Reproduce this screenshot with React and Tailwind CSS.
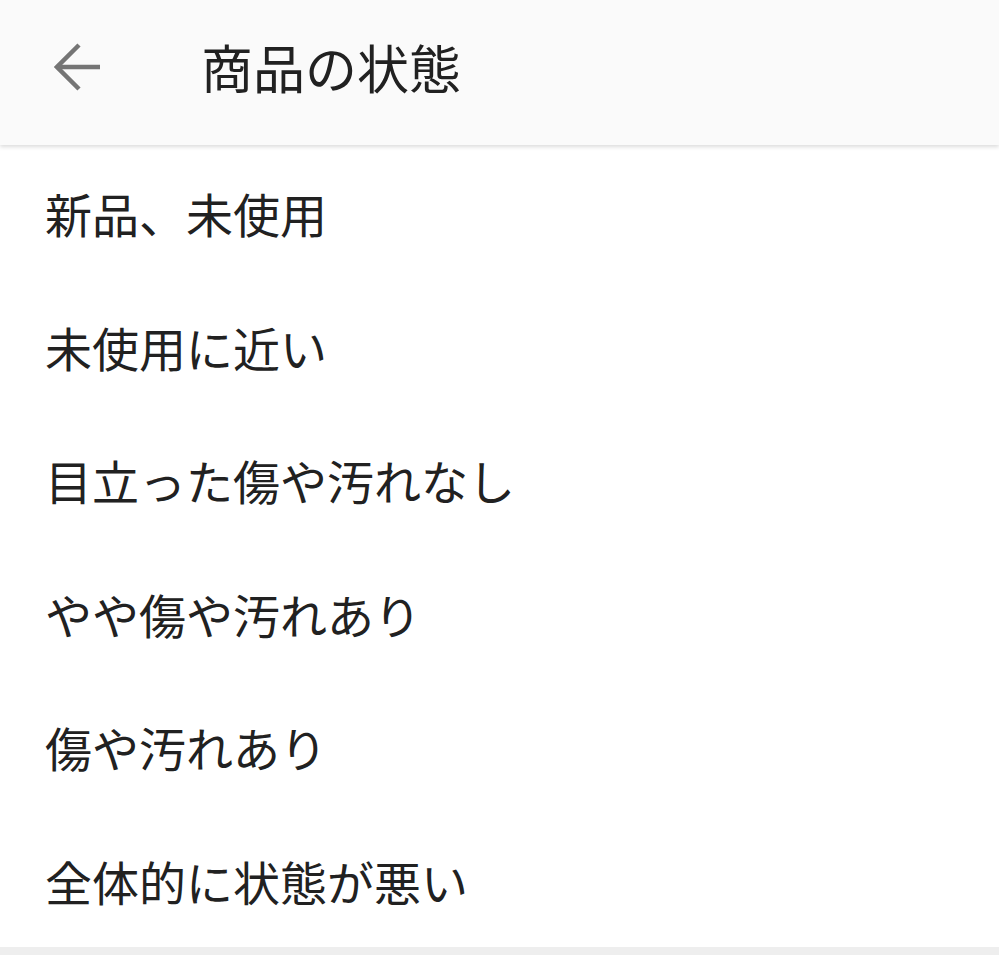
const items = [
  "新品、未使用",
  "未使用に近い",
  "目立った傷や汚れなし",
  "やや傷や汚れあり",
  "傷や汚れあり",
  "全体的に状態が悪い",
];

export default function App() {
  return (
    <div
      className="w-[999px] h-[955px] bg-white overflow-hidden flex flex-col"
      style={{ fontFamily: '"Noto Sans CJK JP", "Noto Sans", sans-serif' }}
    >
      {/* Header */}
      <div className="h-[145px] shrink-0 bg-[#fafafa] flex items-center shadow-[0_2px_4px_rgba(0,0,0,0.14)] relative z-10">
        <button className="w-[48px] h-[48px] ml-[54px] mb-[11px] flex items-center justify-center text-[#757575]">
          <svg width="48" height="48" viewBox="0 0 48 48" fill="none" stroke="currentColor" strokeWidth="4.5">
            <path d="M3 24H46" />
            <path d="M25 2L3 24L25 46" />
          </svg>
        </button>
        <h1 className="ml-[99px] mb-[12px] text-[52px] leading-none text-[#212121] font-normal">
          商品の状態
        </h1>
      </div>

      {/* Options */}
      <ul className="mt-[1px] flex flex-col">
        {items.map((item) => (
          <li
            key={item}
            className="h-[133.5px] flex items-center pl-[45px] text-[47px] leading-none text-[#212121]"
          >
            {item}
          </li>
        ))}
      </ul>
      <div className="flex-1 bg-[#eeeeee]" />
    </div>
  );
}
